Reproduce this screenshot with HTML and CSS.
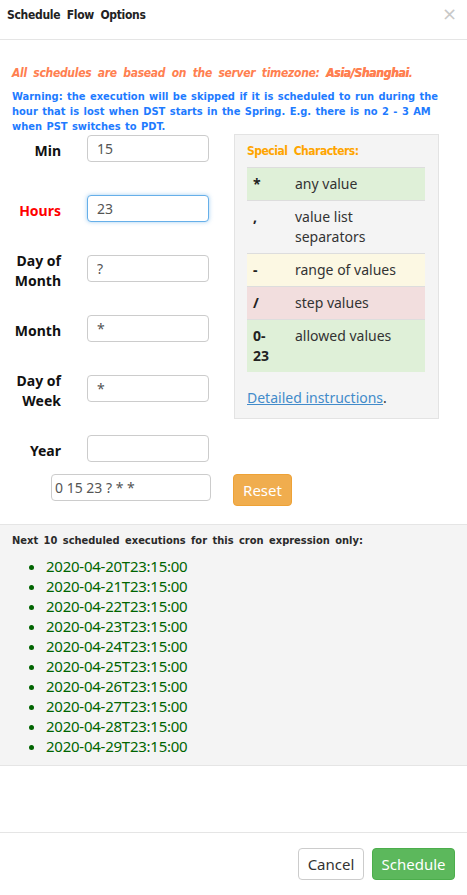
FILE: index.html
```html
<!DOCTYPE html>
<html>
<head>
<meta charset="utf-8">
<link rel="stylesheet" href="styles.css">
</head>
<body>
<div class="modal">
  <div class="modal-header">
    <h4 class="title">Schedule Flow Options</h4>
    <span class="close">×</span>
  </div>
  <div class="modal-body">
    <p class="tz">All schedules are basead on the server timezone: <b class="zone">Asia/Shanghai</b>.</p>
    <p class="warn">Warning: the execution will be skipped if it is scheduled to run during the hour that is lost when DST starts in the Spring. E.g. there is no 2 - 3 AM when PST switches to PDT.</p>
    <div class="row">
      <div class="form-col">
        <div class="fg"><label class="lbl">Min</label><input class="ctl" value="15"></div>
        <div class="fg"><label class="lbl red">Hours</label><input class="ctl focus" value="23"></div>
        <div class="fg"><label class="lbl">Day of<br>Month</label><input class="ctl" value="?"></div>
        <div class="fg"><label class="lbl">Month</label><input class="ctl" value="*"></div>
        <div class="fg"><label class="lbl">Day of<br>Week</label><input class="ctl" value="*"></div>
        <div class="fg"><label class="lbl">Year</label><input class="ctl" value=""></div>
      </div>
      <div class="panel">
        <div class="panel-title">Special Characters:</div>
        <table class="chars">
          <tr class="ok"><th>*</th><td>any value</td></tr>
          <tr><th>,</th><td>value list separators</td></tr>
          <tr class="warnrow"><th>-</th><td>range of values</td></tr>
          <tr class="bad"><th>/</th><td>step values</td></tr>
          <tr class="ok"><th>0-23</th><td>allowed values</td></tr>
        </table>
        <div class="instr"><a href="#">Detailed instructions</a>.</div>
      </div>
    </div>
    <div class="cron-row">
      <input class="ctl cron" value="0 15 23 ? * *">
      <button class="btn reset">Reset</button>
    </div>
  </div>
  <div class="next">
    <div class="next-title">Next 10 scheduled executions for this cron expression only:</div>
    <ul class="runs">
      <li>2020-04-20T23:15:00</li>
      <li>2020-04-21T23:15:00</li>
      <li>2020-04-22T23:15:00</li>
      <li>2020-04-23T23:15:00</li>
      <li>2020-04-24T23:15:00</li>
      <li>2020-04-25T23:15:00</li>
      <li>2020-04-26T23:15:00</li>
      <li>2020-04-27T23:15:00</li>
      <li>2020-04-28T23:15:00</li>
      <li>2020-04-29T23:15:00</li>
    </ul>
  </div>
  <div class="spacer"></div>
  <div class="modal-footer">
    <button class="btn cancel">Cancel</button>
    <button class="btn schedule">Schedule</button>
  </div>
</div>
</body>
</html>
```
FILE: styles.css
```css
* { box-sizing: border-box; }
html, body { margin: 0; padding: 0; background: #fff; }
body {
  font-family: "Noto Sans", "Open Sans", sans-serif;
  font-size: 14px;
  line-height: 20px;
  color: #333;
}
.modal { width: 467px; height: 895px; display: flex; flex-direction: column; }
.modal-header {
  height: 40px;
  border-bottom: 1px solid #e5e5e5;
  display: flex;
  align-items: flex-start;
  justify-content: space-between;
  padding: 6px 10px 0 7px;
}
.title {
  margin: 0;
  font-family: "DejaVu Sans Condensed", sans-serif;
  font-weight: bold;
  font-size: 12px;
  letter-spacing: -0.3px;
  word-spacing: 3px;
  line-height: 18px;
  color: #222;
}
.close { color: #c8c8c8; font-size: 18px; line-height: 16px; font-family: "DejaVu Sans", sans-serif; }
.modal-body { padding: 23px 12px 0 12px; }
.tz {
  margin: 0 0 6px;
  font-family: "DejaVu Sans Condensed", sans-serif;
  font-weight: bold;
  font-style: italic;
  font-size: 12px;
  line-height: 20px;
  letter-spacing: -0.3px;
  word-spacing: 3px;
  color: #ff7f50;
}
.tz .zone { text-shadow: 0.5px 0 0 #ff7f50; }
.warn {
  margin: 0;
  font-family: "DejaVu Sans Condensed", sans-serif;
  font-weight: bold;
  font-size: 11px;
  line-height: 15px;
  letter-spacing: 0;
  word-spacing: 1px;
  color: #1e7bff;
}
.row { display: flex; margin-top: 0; }
.form-col { width: 222px; padding-top: 1px; }
.fg { display: flex; align-items: center; height: 27px; margin-bottom: 33px; }
.lbl {
  width: 49px;
  text-align: right;
  font-weight: bold;
  color: #111;
  line-height: 20px;
  padding-top: 5px;
}
.lbl.red { color: #ff0000; }
.ctl {
  margin-left: 26px;
  width: 122px;
  height: 27px;
  border: 1px solid #ccc;
  border-radius: 4px;
  padding: 0 9px;
  font-family: "Noto Sans", sans-serif;
  font-size: 14px;
  color: #555;
  background: #fff;
}
.ctl.focus { border-color: #66afe9; box-shadow: 0 0 4px rgba(102,175,233,.6); outline: none; }
.panel {
  width: 205px;
  align-self: flex-start;
  background: #f4f4f4;
  border: 1px solid #e3e3e3;
  padding: 7px 12px 10px 12px;
}
.panel-title {
  font-family: "DejaVu Sans Condensed", sans-serif;
  font-weight: bold;
  font-size: 12px;
  letter-spacing: -0.5px;
  word-spacing: 3px;
  line-height: 18px;
  color: #ffa500;
  margin-bottom: 7px;
}
.chars { width: 178px; border-collapse: collapse; table-layout: fixed; }
.chars th, .chars td {
  border-top: 1px solid #ddd;
  padding: 6px 6px;
  text-align: left;
  vertical-align: top;
  line-height: 20px;
}
.chars th { width: 42px; padding-right: 14px; font-weight: bold; color: #222; }
.chars td { color: #333; }
.chars tr.ok { background: #dff0d8; }
.chars tr.warnrow { background: #fcf8e3; }
.chars tr.bad { background: #f2dede; }
.instr { margin-top: 16px; color: #333; }
.instr a { color: #428bca; text-decoration: underline; }
.cron-row { display: flex; align-items: flex-start; margin-top: -21px; padding-left: 39px; height: 50px; }
.cron { margin-left: 0; width: 160px; padding: 0 3px; }
.btn {
  font-family: "Noto Sans", sans-serif;
  font-size: 14px;
  border-radius: 4px;
  border: 1px solid transparent;
  cursor: pointer;
}
.reset {
  margin-left: 22px;
  width: 59px;
  height: 32px;
  background: #f0ad4e;
  border-color: #eea236;
  color: #fff;
  font-size: 15px;
}
.next {
  background: #f4f4f4;
  border-top: 1px solid #e5e5e5;
  border-bottom: 1px solid #e5e5e5;
  padding: 8px 12px 9px;
}
.next-title {
  font-family: "DejaVu Sans Condensed", sans-serif;
  font-weight: bold;
  font-size: 11px;
  letter-spacing: 0;
  word-spacing: 2px;
  line-height: 16px;
  color: #2a2a2a;
}
.runs { margin: 7px 0 0; padding-left: 34px; color: #006400; font-size: 15px; line-height: 20px; letter-spacing: -0.25px; }
.spacer { flex: 1; }
.modal-footer {
  border-top: 1px solid #e5e5e5;
  padding: 15px 12px 15px;
  display: flex;
  justify-content: flex-end;
  gap: 8px;
}
.cancel { background: #fff; border-color: #ccc; color: #333; height: 32px; width: 66px; font-size: 15px; }
.schedule { background: #5cb85c; border-color: #4cae4c; color: #fff; height: 32px; width: 83px; font-size: 15px; }
```
